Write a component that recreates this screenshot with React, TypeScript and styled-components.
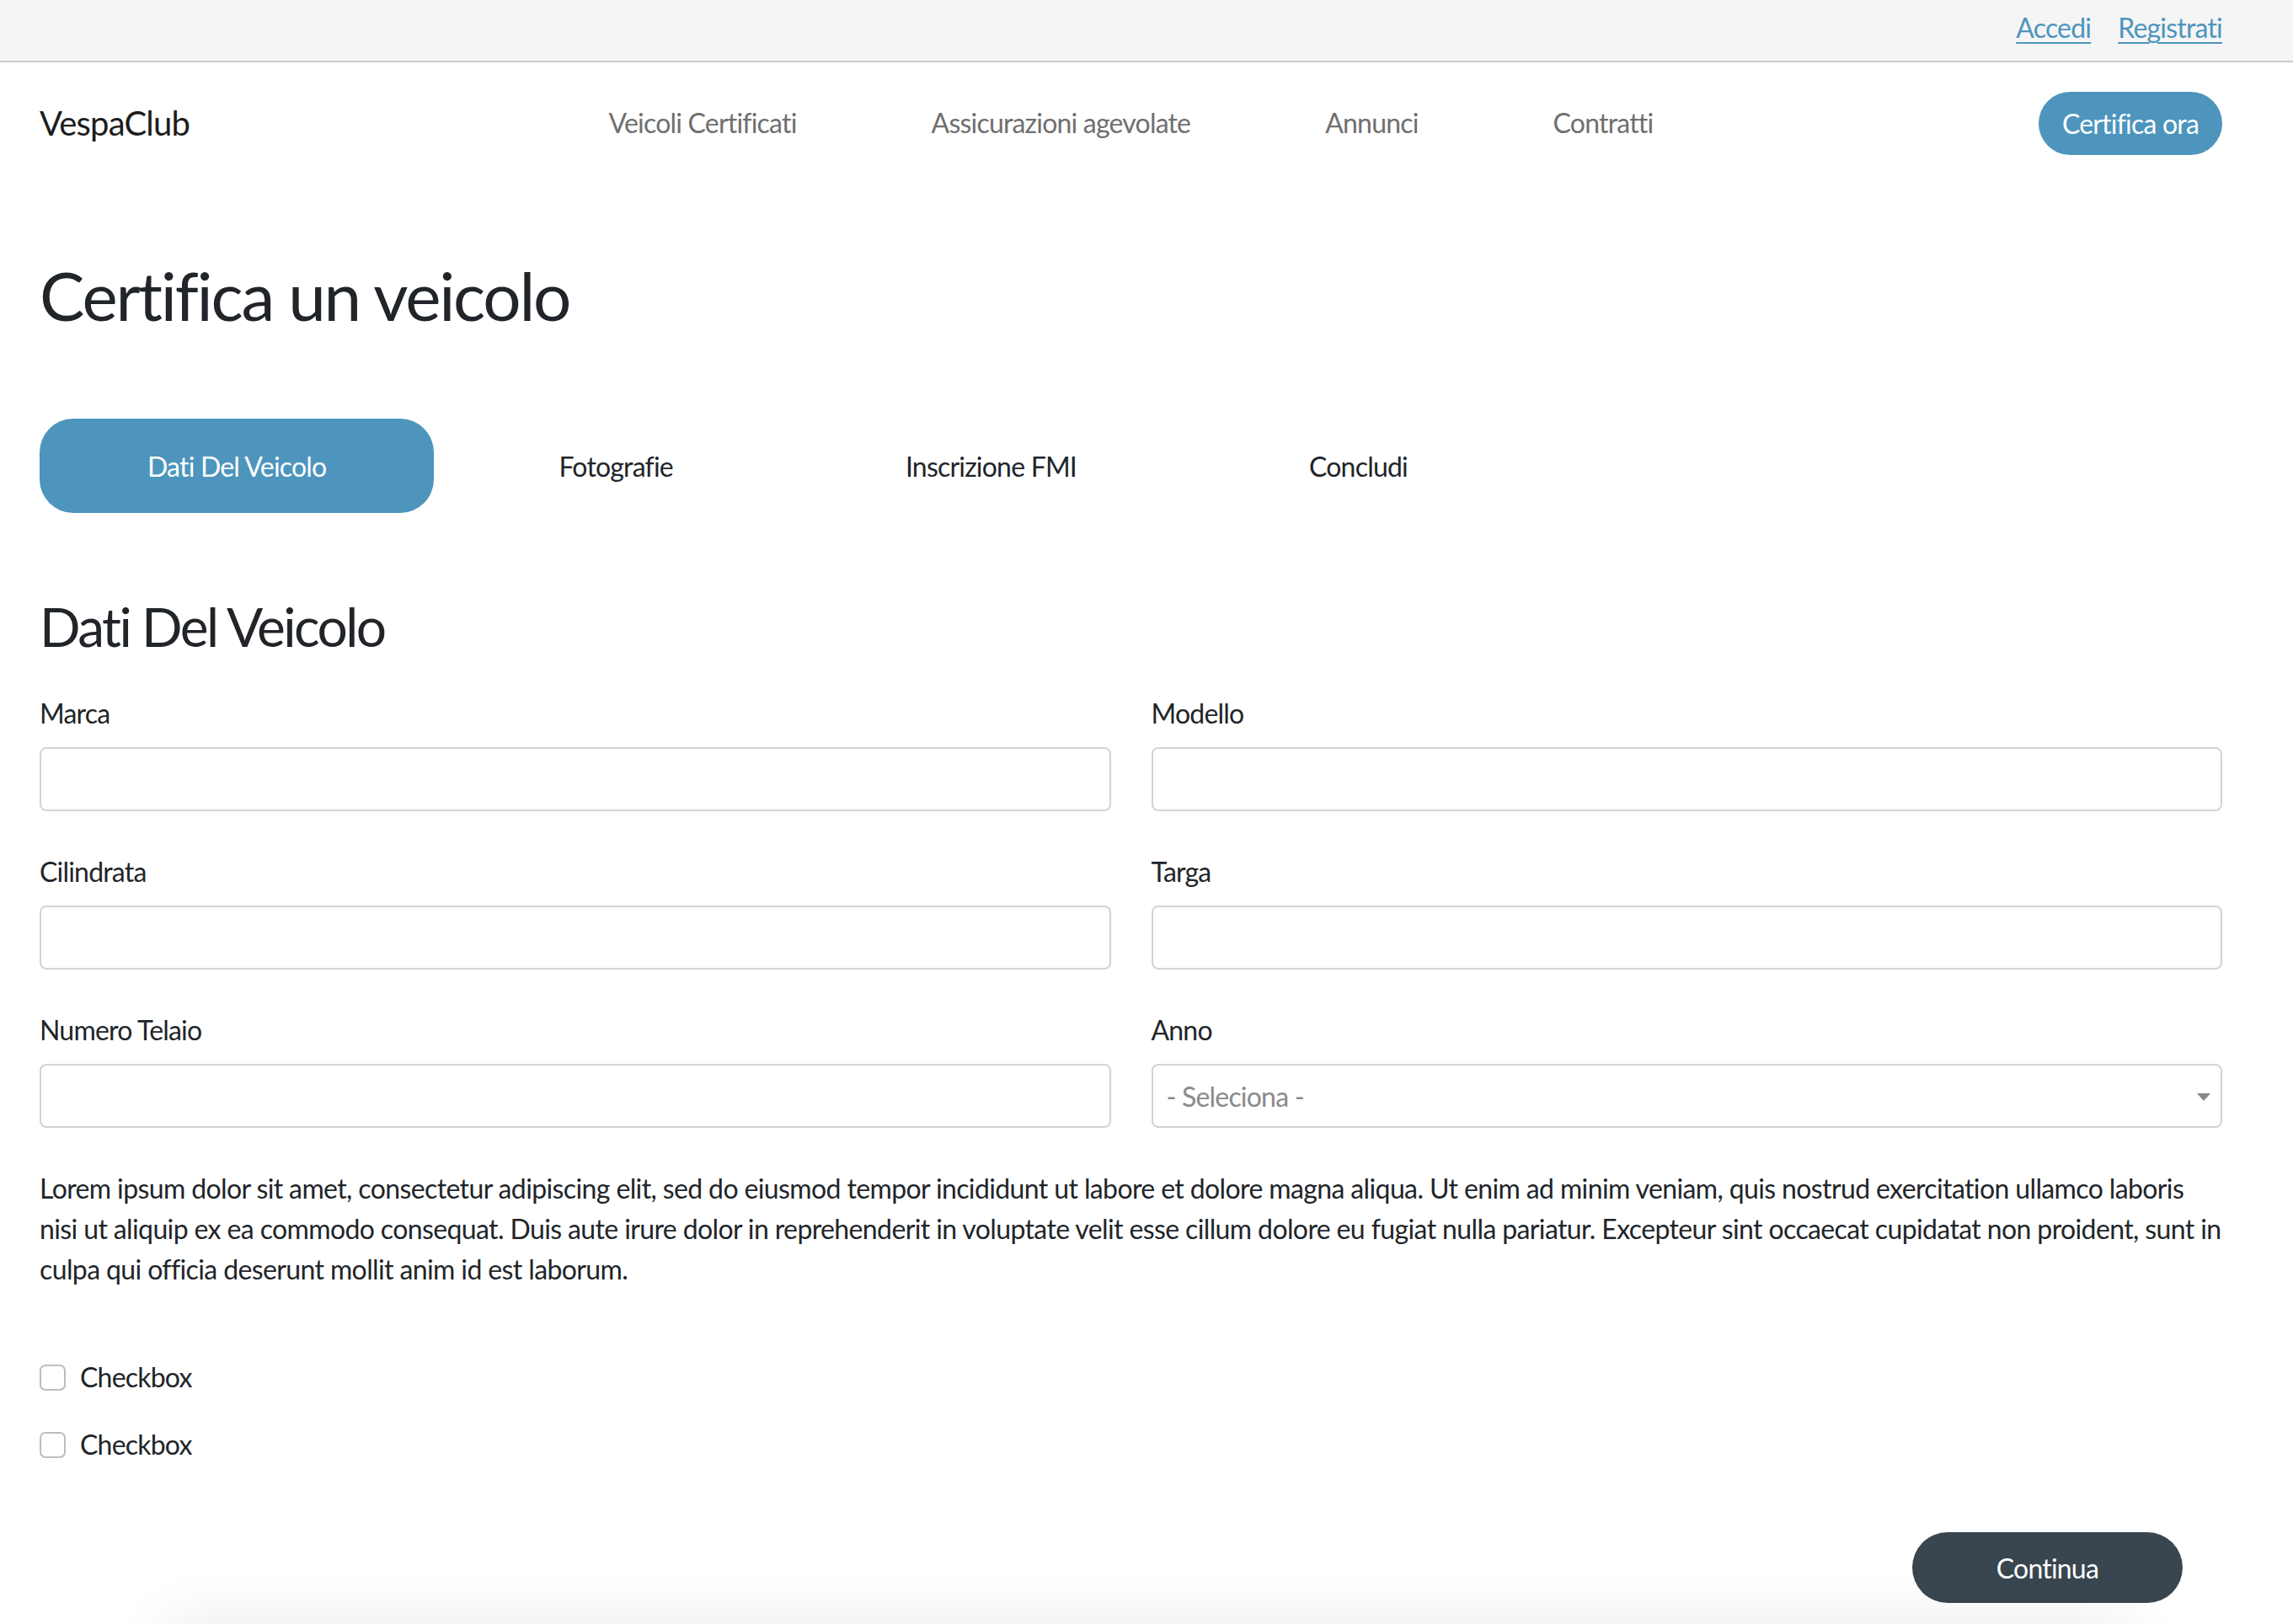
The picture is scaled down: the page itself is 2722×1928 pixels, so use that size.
import React from "react";
import styled, { createGlobalStyle } from "styled-components";

const GlobalStyle = createGlobalStyle`
  * { box-sizing: border-box; }
  html, body { margin: 0; padding: 0; background: #ffffff; }
  body {
    font-family: Lato, "Liberation Sans", sans-serif;
    color: #212529;
    font-size: 32px;
    line-height: 1.5;
    letter-spacing: -0.025em;
  }
  button, input, select { letter-spacing: inherit; }
`;

const Page = styled.div`
  display: flex;
  flex-direction: column;
  min-height: 100vh;
`;

const TopBar = styled.div`
  height: 74px;
  background: #f5f5f5;
  border-bottom: 2px solid #cccccc;
  display: flex;
  justify-content: flex-end;
  align-items: center;
  gap: 32px;
  padding: 0 84px 6px 47px;
`;

const TopLink = styled.a`
  color: #4d95bd;
  text-decoration: underline;
  text-underline-offset: 5px;
  text-decoration-thickness: 2px;
  font-size: 32px;
  cursor: pointer;
`;

const NavBar = styled.nav`
  height: 144px;
  display: grid;
  grid-template-columns: 1fr auto 1fr;
  align-items: center;
  padding: 0 84px 0 47px;
`;

const Brand = styled.div`
  font-size: 40px;
  color: #1d1d1d;
  justify-self: start;
`;

const NavLinks = styled.div`
  display: flex;
  gap: 160px;
`;

const NavLink = styled.a`
  color: #6f6f6f;
  font-size: 32px;
  text-decoration: none;
  cursor: pointer;
`;

const PillButton = styled.button<{ $dark?: boolean }>`
  justify-self: end;
  border: none;
  border-radius: 999px;
  background: ${(p) => (p.$dark ? "#3a464f" : "#4d95bd")};
  color: #ffffff;
  font-family: inherit;
  font-size: 32px;
  height: ${(p) => (p.$dark ? "84px" : "75px")};
  padding: ${(p) => (p.$dark ? "0 100px" : "0 28px")};
  cursor: pointer;
`;

const Main = styled.main`
  padding: 0 84px 0 47px;
  display: flex;
  flex-direction: column;
`;

const Title = styled.h1`
  margin: 84px 0 0;
  font-size: 80px;
  font-weight: 400;
  line-height: 96px;
  letter-spacing: -0.028em;
  color: #212529;
`;

const Tabs = styled.div`
  display: flex;
  gap: 20px;
  margin-top: 99px;
`;

const Tab = styled.button<{ $active?: boolean }>`
  height: 112px;
  padding: 0 128px;
  border: none;
  border-radius: 40px;
  background: ${(p) => (p.$active ? "#4d95bd" : "transparent")};
  color: ${(p) => (p.$active ? "#ffffff" : "#212529")};
  font-family: inherit;
  font-size: 32px;
  cursor: pointer;
`;

const SectionTitle = styled.h2`
  margin: 96px 0 0;
  font-size: 64px;
  font-weight: 400;
  line-height: 77px;
  letter-spacing: -0.04em;
`;

const FormGrid = styled.div`
  margin-top: 41px;
  display: grid;
  grid-template-columns: 1fr 1fr;
  column-gap: 48px;
  row-gap: 48px;
`;

const Field = styled.div`
  display: flex;
  flex-direction: column;
  gap: 16px;
`;

const Label = styled.label`
  font-size: 32px;
  line-height: 48px;
  color: #212529;
`;

const Input = styled.input`
  height: 76px;
  border: 2px solid #d0d4d9;
  border-radius: 8px;
  padding: 0 22px;
  font-family: inherit;
  font-size: 32px;
  outline: none;
  background: #fff;
`;

const SelectWrap = styled.div`
  position: relative;
  &::after {
    content: "";
    position: absolute;
    right: 14px;
    top: 35px;
    border-left: 8px solid transparent;
    border-right: 8px solid transparent;
    border-top: 9px solid #888888;
    pointer-events: none;
  }
`;

const Select = styled.select`
  width: 100%;
  height: 76px;
  appearance: none;
  -webkit-appearance: none;
  border: 2px solid #d0d4d9;
  border-radius: 8px;
  padding: 0 16px;
  font-family: inherit;
  font-size: 32px;
  color: #8a8a8a;
  background: #fff;
  outline: none;
`;

const Paragraph = styled.p`
  margin: 48px 0 0;
  font-size: 32px;
  line-height: 48px;
  letter-spacing: -0.62px;
  color: #212529;
`;

const Checks = styled.div`
  margin-top: 80px;
  display: flex;
  flex-direction: column;
  gap: 32px;
`;

const CheckRow = styled.label`
  display: flex;
  align-items: center;
  gap: 17px;
  height: 48px;
  font-size: 32px;
  color: #212529;
`;

const CheckBox = styled.span`
  width: 31px;
  height: 31px;
  border: 2px solid #bdbdbd;
  border-radius: 7px;
  background: #fff;
`;

const Actions = styled.div`
  margin-top: 80px;
  display: flex;
  justify-content: flex-end;
  padding-right: 47px;
`;

const Footer = styled.footer`
  margin: 25px 200px 0;
  height: 300px;
  background: #ffffff;
  box-shadow: 0 0 70px rgba(0, 0, 0, 0.09);
`;

const fields = [
  { label: "Marca" },
  { label: "Modello" },
  { label: "Cilindrata" },
  { label: "Targa" },
  { label: "Numero Telaio" },
];

export default function App() {
  return (
    <>
      <GlobalStyle />
      <Page>
        <TopBar>
          <TopLink>Accedi</TopLink>
          <TopLink>Registrati</TopLink>
        </TopBar>
        <NavBar>
          <Brand>VespaClub</Brand>
          <NavLinks>
            <NavLink>Veicoli Certificati</NavLink>
            <NavLink>Assicurazioni agevolate</NavLink>
            <NavLink>Annunci</NavLink>
            <NavLink>Contratti</NavLink>
          </NavLinks>
          <PillButton>Certifica ora</PillButton>
        </NavBar>
        <Main>
          <Title>Certifica un veicolo</Title>
          <Tabs>
            <Tab $active>Dati Del Veicolo</Tab>
            <Tab>Fotografie</Tab>
            <Tab>Inscrizione FMI</Tab>
            <Tab>Concludi</Tab>
          </Tabs>
          <SectionTitle>Dati Del Veicolo</SectionTitle>
          <FormGrid>
            {fields.map((f) => (
              <Field key={f.label}>
                <Label>{f.label}</Label>
                <Input type="text" />
              </Field>
            ))}
            <Field>
              <Label>Anno</Label>
              <SelectWrap>
                <Select defaultValue="">
                  <option value="">- Seleciona -</option>
                </Select>
              </SelectWrap>
            </Field>
          </FormGrid>
          <Paragraph>
            Lorem ipsum dolor sit amet, consectetur adipiscing elit, sed do eiusmod tempor incididunt ut labore et dolore magna aliqua. Ut enim ad minim veniam, quis nostrud exercitation ullamco laboris nisi ut aliquip ex ea commodo consequat. Duis aute irure dolor in reprehenderit in voluptate velit esse cillum dolore eu fugiat nulla pariatur. Excepteur sint occaecat cupidatat non proident, sunt in culpa qui officia deserunt mollit anim id est laborum.
          </Paragraph>
          <Checks>
            <CheckRow>
              <CheckBox />
              Checkbox
            </CheckRow>
            <CheckRow>
              <CheckBox />
              Checkbox
            </CheckRow>
          </Checks>
          <Actions>
            <PillButton $dark>Continua</PillButton>
          </Actions>
        </Main>
        <Footer />
      </Page>
    </>
  );
}
